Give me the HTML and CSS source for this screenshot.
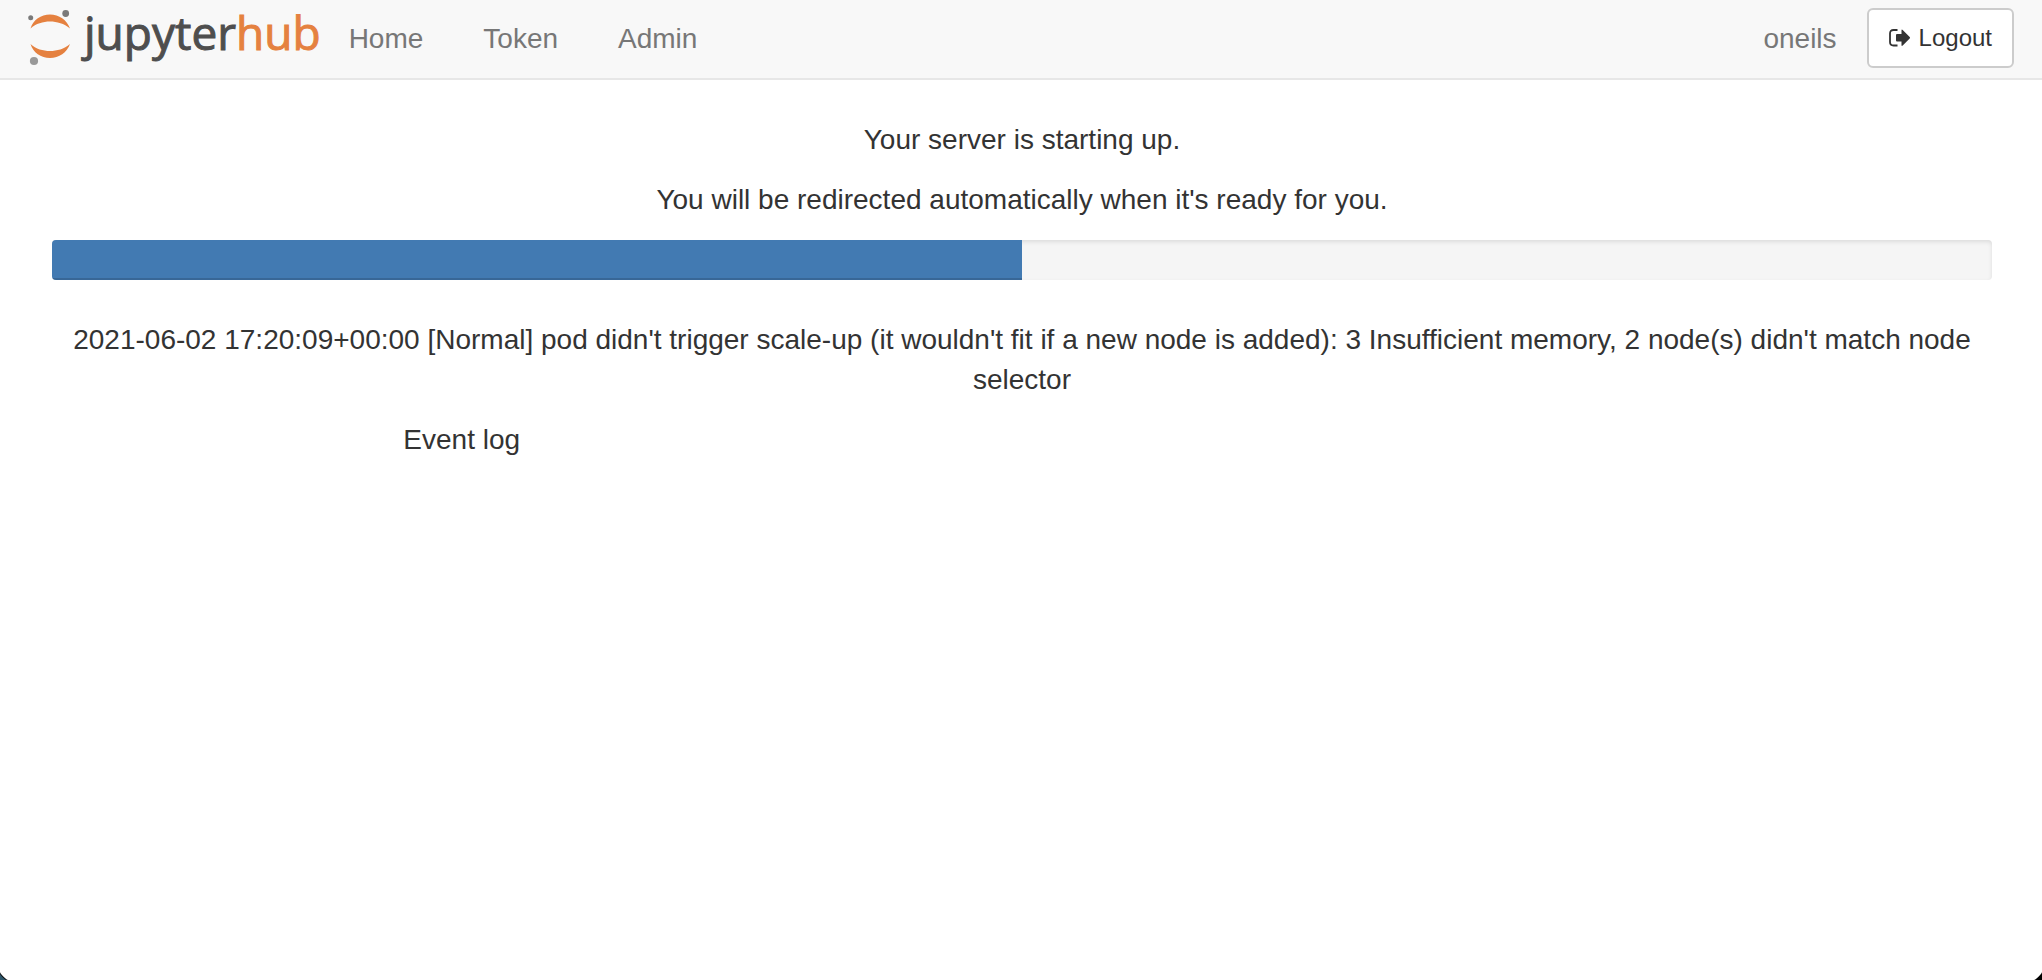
FILE: index.html
```html
<!DOCTYPE html>
<html lang="en">
<head>
<meta charset="utf-8">
<title>JupyterHub</title>
<link rel="stylesheet" href="styles.css">
</head>
<body>
<nav class="navbar">
  <a class="brand" href="#" aria-label="jupyterhub">
    <svg class="brand-mark" viewBox="0 0 44 56" aria-hidden="true">
      <path fill="#e58140" d="M2.500 19.500 C5 11 13 5.500 22 5.500 C31 5.500 39 11 42 19.500 C36 14.500 29 12.500 22 12.500 C15 12.500 8 14.500 2.500 19.500Z"/>
      <path fill="#e58140" d="M2.500 35 C5 43.500 13 49 22 49 C31 49 39 43.500 42 35 C36 40 29 42 22 42 C15 42 8 40 2.500 35Z"/>
      <circle cx="2.700" cy="8.800" r="2.500" fill="#7a7a7a"/>
      <circle cx="37.700" cy="4.500" r="3.400" fill="#7a7a7a"/>
      <circle cx="6" cy="52" r="4.100" fill="#999"/>
    </svg>
    <span class="brand-name">jupyter<span class="brand-hub">hub</span></span>
  </a>
  <ul class="nav-links">
    <li><a href="#">Home</a></li>
    <li><a href="#">Token</a></li>
    <li><a href="#">Admin</a></li>
  </ul>
  <div class="user">
    <span class="user-name">oneils</span>
    <a class="logout" href="#">
      <svg class="logout-icon" viewBox="0 0 22 18" aria-hidden="true">
        <path d="M8.500 1H4.500Q1 1 1 4.500V13Q1 16.500 4.500 16.500H8.500" fill="none" stroke="#333" stroke-width="1.800"/>
        <path d="M7 6Q7 5 8 5H12.500V1.500Q12.500 0 13.700 1L20.700 8Q21.500 8.800 20.700 9.600L13.700 16.600Q12.500 17.500 12.500 16V12.600H8Q7 12.600 7 11.600Z" fill="#333"/>
      </svg>
      Logout
    </a>
  </div>
</nav>
<main class="content">
  <p>Your server is starting up.</p>
  <p>You will be redirected automatically when it's ready for you.</p>
  <div class="progress" role="progressbar" aria-label="Server startup" aria-valuenow="50" aria-valuemin="0" aria-valuemax="100">
    <div class="progress-bar" style="width: 50%"></div>
  </div>
  <p>2021-06-02 17:20:09+00:00 [Normal] pod didn't trigger scale-up (it wouldn't fit if a new node is added): 3 Insufficient memory, 2 node(s) didn't match node selector</p>
  <details class="event-log">
    <summary>Event log</summary>
  </details>
</main>
</body>
</html>
```
FILE: styles.css
```css
* {
  box-sizing: border-box;
}

body {
  position: relative;
  min-height: 100vh;
  margin: 0;
  background: #fff;
  color: #333;
  font: 28px/40px "Liberation Sans", Arial, sans-serif;
}

/* Rounded window corners */
body::before,
body::after {
  content: "";
  position: absolute;
  bottom: 0;
  width: 20px;
  height: 20px;
}

body::before {
  left: 0;
  background: radial-gradient(circle at 100% 0, transparent 23px, #111 24px, #2c566b 25px);
}

body::after {
  right: 0;
  background: radial-gradient(circle at 0 0, transparent 23px, #000 24px);
}

a {
  color: inherit;
  text-decoration: none;
}

.navbar {
  display: flex;
  align-items: center;
  height: 80px;
  padding: 0 28px;
  background: #f8f8f8;
  border-bottom: 2px solid #e7e7e7;
  color: #777;
}

.brand {
  display: flex;
  align-items: center;
  gap: 12px;
  padding-bottom: 4px;
}

.brand-mark {
  width: 44px;
  height: 56px;
  overflow: visible;
}

.brand-name {
  padding-bottom: 10px;
  color: #4e4e4e;
  font: 46px/56px "Open Sans", "Noto Sans", sans-serif;
  -webkit-text-stroke: 1px currentColor;
}

.brand-hub {
  color: #e58140;
}

.nav-links {
  display: flex;
  gap: 60px;
  margin: 0;
  padding: 0 0 0 28px;
  list-style: none;
}

.user {
  display: flex;
  align-items: center;
  gap: 30px;
  margin-left: auto;
}

.logout {
  display: flex;
  align-items: center;
  gap: 8px;
  margin-bottom: 2px;
  padding: 9px 20px;
  border: 2px solid #ccc;
  border-radius: 6px;
  background: #fff;
  color: #333;
  font-size: 24px;
  line-height: 38px;
}

.logout-icon {
  width: 22px;
  height: 18px;
}

.content {
  padding: 40px 50px 0 52px;
  text-align: center;
}

.content p {
  margin: 0 0 20px;
}

.progress {
  height: 40px;
  margin-bottom: 40px;
  overflow: hidden;
  border-radius: 4px;
  background: #f5f5f5;
  box-shadow: inset 0 2px 4px rgba(0, 0, 0, 0.1);
}

.progress-bar {
  height: 100%;
  background: #427ab2;
  box-shadow: inset 0 -2px 0 rgba(0, 0, 0, 0.15);
}

.event-log {
  margin: 0 16.6667%;
  padding: 0 28px;
  text-align: left;
}

.event-log summary {
  list-style: none;
}
```
